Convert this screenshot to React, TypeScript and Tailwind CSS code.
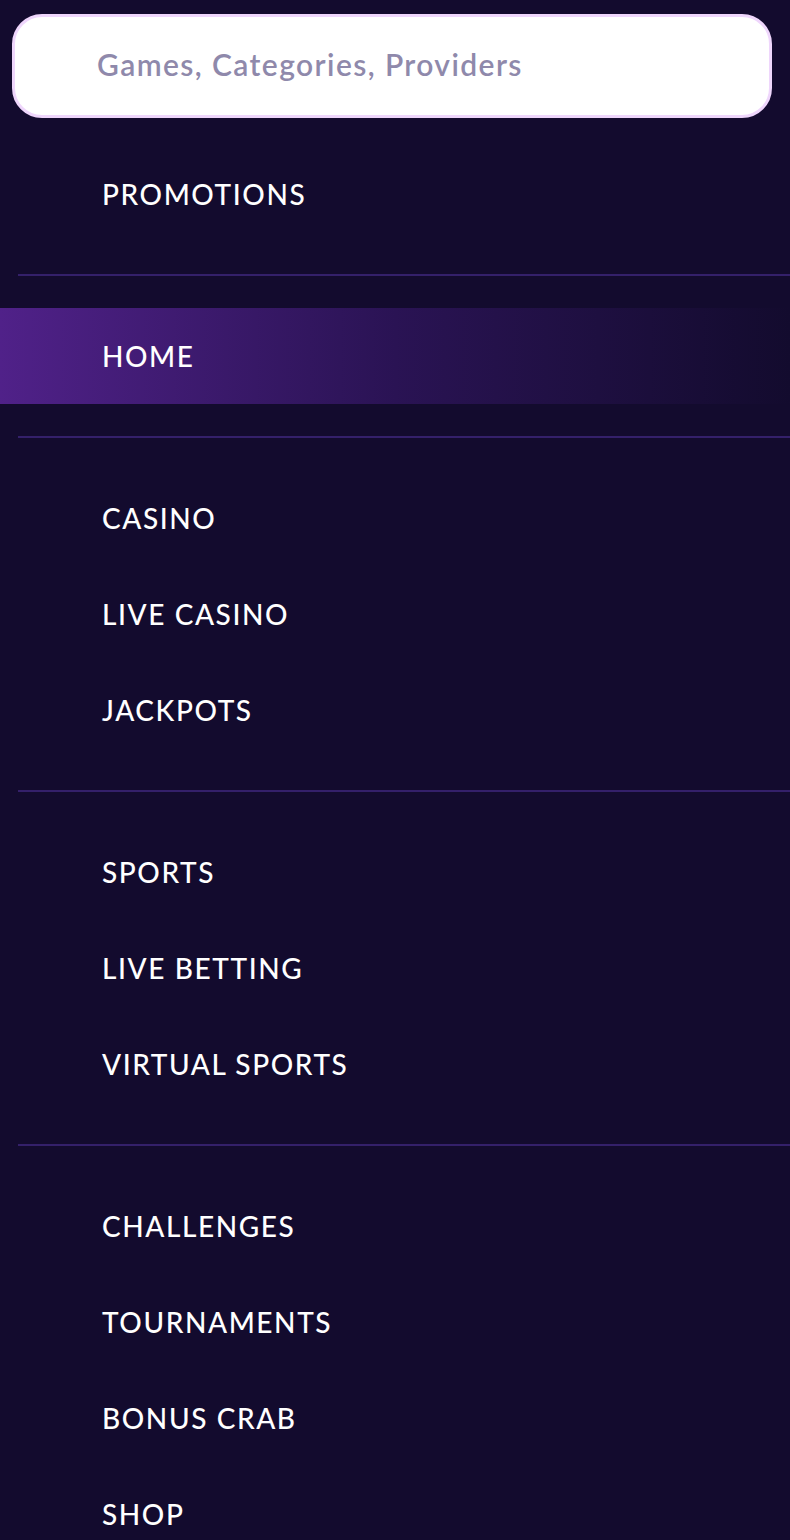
import React from 'react';

type Item = { label: string; active?: boolean };

const groups: Item[][] = [
  [{ label: 'PROMOTIONS' }],
  [{ label: 'HOME', active: true }],
  [{ label: 'CASINO' }, { label: 'LIVE CASINO' }, { label: 'JACKPOTS' }],
  [{ label: 'SPORTS' }, { label: 'LIVE BETTING' }, { label: 'VIRTUAL SPORTS' }],
  [{ label: 'CHALLENGES' }, { label: 'TOURNAMENTS' }, { label: 'BONUS CRAB' }, { label: 'SHOP' }],
];

const NavRow: React.FC<{ item: Item }> = ({ item }) => (
  <a
    href="#"
    className={`flex h-[96px] items-center pl-[102px] text-[28px] font-medium tracking-[1.6px] text-white ${
      item.active ? 'bg-gradient-to-r from-[#502189] via-[#2a1354] to-[#130b2e]' : ''
    }`}
  >
    {item.label}
  </a>
);

const App: React.FC = () => {
  return (
    <div className="min-h-screen overflow-hidden bg-[#130b2e] font-['Lato',sans-serif]">
      {/* Search */}
      <div className="pl-[12px] pr-[18px] pt-[14px]">
        <div className="flex h-[104px] items-center rounded-[30px] border-[3px] border-[#efd6fc] bg-white pb-[4px] pl-[82px]">
          <input
            className="w-full bg-transparent text-[30px] font-semibold tracking-[1.4px] text-[#8f89ab] placeholder:text-[#8f89ab] outline-none"
            placeholder="Games, Categories, Providers"
          />
        </div>
      </div>

      {/* Menu */}
      <nav className="mt-[28px]">
        {groups.map((group, gi) => (
          <div key={gi}>
            {gi > 0 && <div className="ml-[18px] h-[2px] bg-[#34206a]" />}
            <div className={gi === 0 ? 'pb-[32px]' : gi === groups.length - 1 ? 'pt-[32px]' : 'py-[32px]'}>
              {group.map((item) => (
                <NavRow key={item.label} item={item} />
              ))}
            </div>
          </div>
        ))}
      </nav>
    </div>
  );
};

export default App;
